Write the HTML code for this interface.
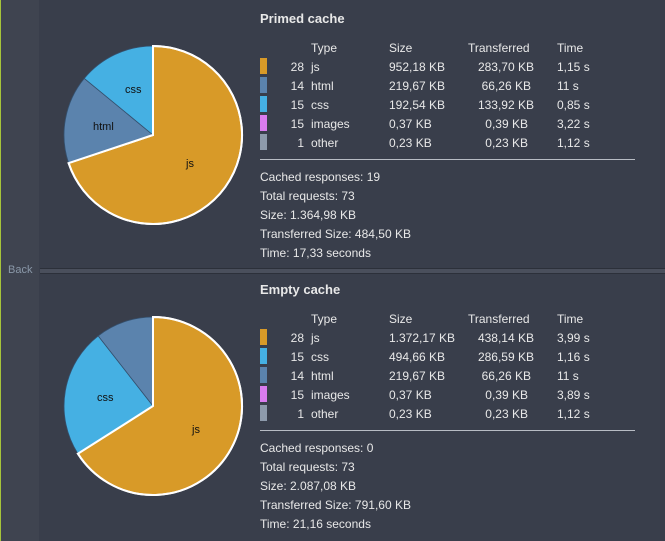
<!DOCTYPE html>
<html><head><meta charset="utf-8"><style>
body{margin:0;width:665px;height:541px;background:#393e4b;font-family:"Liberation Sans",sans-serif;color:#e8e8e8;position:relative;overflow:hidden}
.l{position:absolute;left:0;top:0;width:1px;height:541px;background:#a6c43a}
.strip{position:absolute;left:1px;top:0;width:38px;height:541px;background:#3f4450}
.div{position:absolute;left:40px;right:0;top:268px;height:4px;border-top:1px solid #2c303a;border-bottom:1px solid #2c303a;background:#4a4f5c}
.back{position:absolute;left:8px;top:264px;font-size:11px;color:#8a98a8}
.t{position:absolute;font-size:12px;white-space:nowrap;line-height:14px}
.h{font-weight:bold;font-size:13px}
.sw{position:absolute;width:7px;height:16px;left:260px}
.r{text-align:right}
.hr{position:absolute;left:260px;width:375px;height:1px;background:#b8bcc4}
svg{position:absolute;left:0;top:0}
</style></head><body>
<div class="l"></div><div class="strip"></div><div class="div"></div><div class="back">Back</div>
<svg width="665" height="541">
<path d="M153 135 L153 46 A89 89 0 1 1 68.6 163.1 Z" fill="#d89a28" stroke="#fff" stroke-width="2"/>
<path d="M153 135 L68.6 163.1 A89 89 0 0 1 84.3 78.4 Z" fill="#5b83ad" stroke="#34506e" stroke-width="0.8"/>
<path d="M153 135 L84.3 78.4 A89 89 0 0 1 153 46 Z" fill="#45b0e3" stroke="#34506e" stroke-width="0.8"/>
<path d="M153 135 L153 46 A89 89 0 1 1 68.6 163.1 Z" fill="none" stroke="#fff" stroke-width="2"/>
<text x="186" y="167" font-size="11" font-family="Liberation Sans" fill="#111">js</text>
<text x="93" y="130" font-size="11" font-family="Liberation Sans" fill="#111">html</text>
<text x="125" y="93" font-size="11" font-family="Liberation Sans" fill="#111">css</text>
<path d="M153 406 L153 317 A89 89 0 1 1 77.9 453.7 Z" fill="#d89a28" stroke="#fff" stroke-width="2"/>
<path d="M153 406 L77.9 453.7 A89 89 0 0 1 98.2 335.9 Z" fill="#45b0e3" stroke="#34506e" stroke-width="0.8"/>
<path d="M153 406 L98.2 335.9 A89 89 0 0 1 153 317 Z" fill="#5b83ad" stroke="#34506e" stroke-width="0.8"/>
<path d="M153 406 L153 317 A89 89 0 1 1 77.9 453.7 Z" fill="none" stroke="#fff" stroke-width="2"/>
<text x="192" y="433" font-size="11" font-family="Liberation Sans" fill="#111">js</text>
<text x="97" y="401" font-size="11" font-family="Liberation Sans" fill="#111">css</text>
</svg>

<div class="t h" style="left:260px;top:12px">Primed cache</div>
<div class="t" style="left:311px;top:41px">Type</div><div class="t" style="left:389px;top:41px">Size</div><div class="t" style="left:468px;top:41px">Transferred</div><div class="t" style="left:557px;top:41px">Time</div>
<div class="sw" style="top:58px;background:#d89a28"></div>
<div class="sw" style="top:77px;background:#5b83ad"></div>
<div class="sw" style="top:96px;background:#45b0e3"></div>
<div class="sw" style="top:115px;background:#d97cef"></div>
<div class="sw" style="top:134px;background:#8d9aab"></div>
<div class="t r" style="left:274px;width:30px;top:60px">28</div><div class="t" style="left:311px;top:60px">js</div><div class="t" style="left:389px;top:60px">952,18 KB</div><div class="t r" style="left:450px;width:84px;top:60px">283,70 KB</div><div class="t" style="left:557px;top:60px">1,15 s</div>
<div class="t r" style="left:274px;width:30px;top:79px">14</div><div class="t" style="left:311px;top:79px">html</div><div class="t" style="left:389px;top:79px">219,67 KB</div><div class="t r" style="left:450px;width:81px;top:79px">66,26 KB</div><div class="t" style="left:557px;top:79px">11 s</div>
<div class="t r" style="left:274px;width:30px;top:98px">15</div><div class="t" style="left:311px;top:98px">css</div><div class="t" style="left:389px;top:98px">192,54 KB</div><div class="t r" style="left:450px;width:84px;top:98px">133,92 KB</div><div class="t" style="left:557px;top:98px">0,85 s</div>
<div class="t r" style="left:274px;width:30px;top:117px">15</div><div class="t" style="left:311px;top:117px">images</div><div class="t" style="left:389px;top:117px">0,37 KB</div><div class="t r" style="left:450px;width:78px;top:117px">0,39 KB</div><div class="t" style="left:557px;top:117px">3,22 s</div>
<div class="t r" style="left:274px;width:30px;top:136px">1</div><div class="t" style="left:311px;top:136px">other</div><div class="t" style="left:389px;top:136px">0,23 KB</div><div class="t r" style="left:450px;width:78px;top:136px">0,23 KB</div><div class="t" style="left:557px;top:136px">1,12 s</div>
<div class="hr" style="top:159px"></div>
<div class="t" style="left:260px;top:170px">Cached responses: 19</div>
<div class="t" style="left:260px;top:189px">Total requests: 73</div>
<div class="t" style="left:260px;top:208px">Size: 1.364,98 KB</div>
<div class="t" style="left:260px;top:227px">Transferred Size: 484,50 KB</div>
<div class="t" style="left:260px;top:246px">Time: 17,33 seconds</div>

<div class="t h" style="left:260px;top:283px">Empty cache</div>
<div class="t" style="left:311px;top:312px">Type</div><div class="t" style="left:389px;top:312px">Size</div><div class="t" style="left:468px;top:312px">Transferred</div><div class="t" style="left:557px;top:312px">Time</div>
<div class="sw" style="top:329px;background:#d89a28"></div>
<div class="sw" style="top:348px;background:#45b0e3"></div>
<div class="sw" style="top:367px;background:#5b83ad"></div>
<div class="sw" style="top:386px;background:#d97cef"></div>
<div class="sw" style="top:405px;background:#8d9aab"></div>
<div class="t r" style="left:274px;width:30px;top:331px">28</div><div class="t" style="left:311px;top:331px">js</div><div class="t" style="left:389px;top:331px">1.372,17 KB</div><div class="t r" style="left:450px;width:84px;top:331px">438,14 KB</div><div class="t" style="left:557px;top:331px">3,99 s</div>
<div class="t r" style="left:274px;width:30px;top:350px">15</div><div class="t" style="left:311px;top:350px">css</div><div class="t" style="left:389px;top:350px">494,66 KB</div><div class="t r" style="left:450px;width:84px;top:350px">286,59 KB</div><div class="t" style="left:557px;top:350px">1,16 s</div>
<div class="t r" style="left:274px;width:30px;top:369px">14</div><div class="t" style="left:311px;top:369px">html</div><div class="t" style="left:389px;top:369px">219,67 KB</div><div class="t r" style="left:450px;width:81px;top:369px">66,26 KB</div><div class="t" style="left:557px;top:369px">11 s</div>
<div class="t r" style="left:274px;width:30px;top:388px">15</div><div class="t" style="left:311px;top:388px">images</div><div class="t" style="left:389px;top:388px">0,37 KB</div><div class="t r" style="left:450px;width:78px;top:388px">0,39 KB</div><div class="t" style="left:557px;top:388px">3,89 s</div>
<div class="t r" style="left:274px;width:30px;top:407px">1</div><div class="t" style="left:311px;top:407px">other</div><div class="t" style="left:389px;top:407px">0,23 KB</div><div class="t r" style="left:450px;width:78px;top:407px">0,23 KB</div><div class="t" style="left:557px;top:407px">1,12 s</div>
<div class="hr" style="top:430px"></div>
<div class="t" style="left:260px;top:441px">Cached responses: 0</div>
<div class="t" style="left:260px;top:460px">Total requests: 73</div>
<div class="t" style="left:260px;top:479px">Size: 2.087,08 KB</div>
<div class="t" style="left:260px;top:498px">Transferred Size: 791,60 KB</div>
<div class="t" style="left:260px;top:517px">Time: 21,16 seconds</div>
</body></html>
